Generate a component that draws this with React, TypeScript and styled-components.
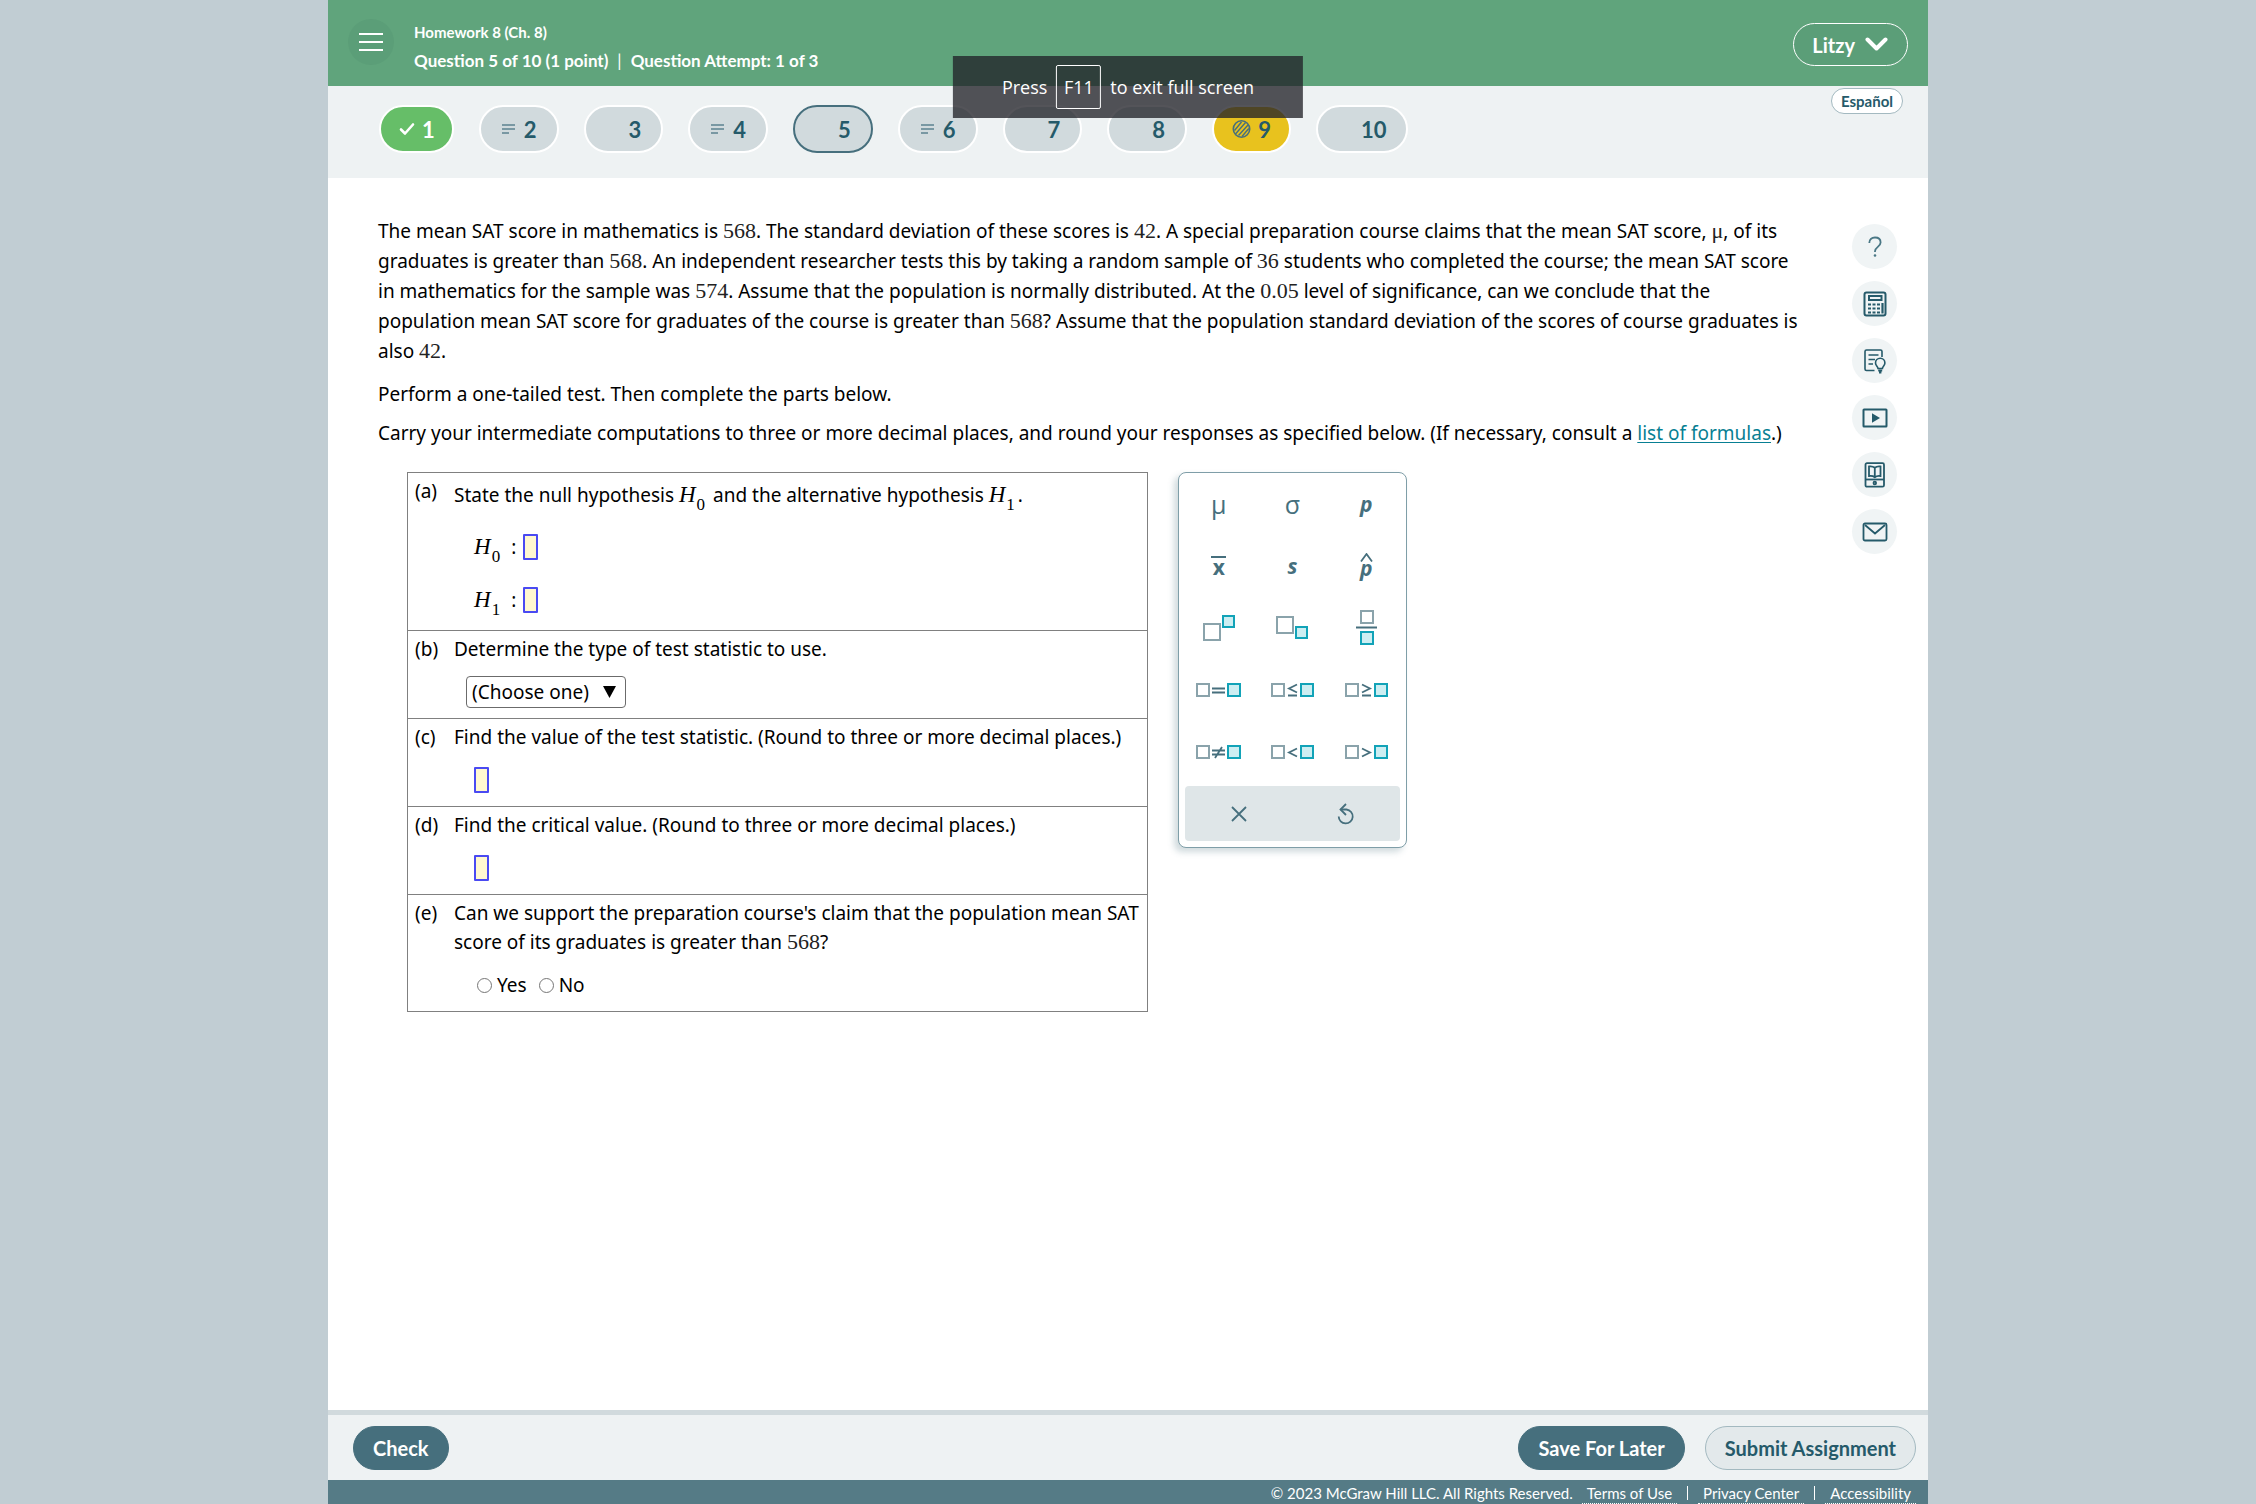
import React, { useState } from "react";
import styled, { createGlobalStyle, css } from "styled-components";

const ui = `Lato, "Open Sans", sans-serif`;
const reading = `"Noto Sans", "DejaVu Sans", Verdana, sans-serif`;
const math = `"Liberation Serif", "Times New Roman", serif`;

const color = {
  teal: "#466f7d",
  deep: "#255a6a",
  mist: "#eef2f3",
  slate: "#d1dadd",
  green: "#60a47c",
};

const GlobalStyle = createGlobalStyle`
  *, *::before, *::after { box-sizing: border-box; }
  body { margin: 0; background: #c1cdd3; font-family: ${reading}; color: #000; }
  button, input, select { font: inherit; margin: 0; }
  button { cursor: pointer; }
  p { margin: 0; }
`;

const Page = styled.div`
  display: flex;
  flex-direction: column;
  max-width: 1600px;
  min-height: 100vh;
  margin: 0 auto;
  background: #fff;
`;

/* ---------- header ---------- */

const Header = styled.header`
  display: flex;
  align-items: flex-start;
  height: 86px;
  padding: 19px 20px 0;
  background: ${color.green};
  color: #fff;
  font-family: ${ui};
`;

const MenuButton = styled.button`
  display: grid;
  place-items: center;
  width: 46px;
  height: 46px;
  padding: 0;
  border: 0;
  border-radius: 50%;
  background: #5b9e78;
`;

const Titles = styled.div`
  flex: 1;
  margin-left: 20px;
  font-weight: 700;
`;

const Course = styled.h1`
  margin: 0;
  font-size: 15px;
  line-height: 26px;
`;

const Attempt = styled.p`
  display: flex;
  font-size: 17px;
  line-height: 32px;
`;

const Bar = styled.span`
  margin: 0 9px;
  font-weight: 400;
`;

const UserButton = styled.button`
  display: flex;
  align-items: center;
  gap: 10px;
  height: 43px;
  margin-top: 4px;
  padding: 0 19px 0 18px;
  border: 1px solid #fff;
  border-radius: 22px;
  background: #5b9e78;
  color: #fff;
  font-size: 20px;
  font-weight: 700;
`;

/* ---------- question navigation ---------- */

const QuestionNav = styled.nav`
  display: flex;
  justify-content: space-between;
  align-items: flex-start;
  height: 92px;
  padding: 0 25px 0 51px;
  background: ${color.mist};
  font-family: ${ui};
`;

const Pills = styled.div`
  display: flex;
  gap: 25px;
  padding-top: 19px;
`;

type Status = "done" | "saved" | "blank" | "current" | "partial";

const Pill = styled.button<{ $status: Status }>`
  display: flex;
  align-items: center;
  gap: 8px;
  height: 48px;
  padding: 0 20px;
  border: 2px solid #fff;
  border-radius: 24px;
  background: ${color.slate};
  color: ${color.deep};
  font-size: 22px;
  font-weight: 700;
  ${(p) => p.$status === "done" && css`
    padding: 0 17px 0 18px;
    gap: 7px;
    background: #66be68;
    color: #fff;
  `}
  ${(p) => p.$status === "current" && css`border-color: ${color.teal};`}
  ${(p) => p.$status === "partial" && css`background: #e8c21e; padding: 0 18px; gap: 7px;`}
`;

const PillIcon = styled.span`
  display: grid;
  place-items: center;
  min-width: 15px;
`;

const Language = styled.button`
  height: 26px;
  margin-top: 2px;
  padding: 0 9px;
  border: 1px solid #a3b9c0;
  border-radius: 13px;
  background: #fff;
  color: ${color.deep};
  font-size: 15px;
  font-weight: 700;
  line-height: 22px;
`;

const Toast = styled.div`
  position: absolute;
  top: 56px;
  left: 50%;
  transform: translateX(-50%);
  display: flex;
  align-items: center;
  gap: 9px;
  height: 62px;
  padding: 0 49px;
  background: rgba(33, 33, 39, 0.77);
  color: #fff;
  font-family: "Open Sans", "Noto Sans", sans-serif;
  font-size: 18px;
  white-space: nowrap;
`;

const Key = styled.kbd`
  display: grid;
  place-items: center;
  width: 45px;
  height: 44px;
  border: 1px solid #fff;
  border-radius: 2px;
  font: inherit;
`;

/* ---------- question body ---------- */

const Body = styled.main`
  flex: 1;
  display: flex;
  justify-content: space-between;
  align-items: flex-start;
  padding: 38px 31px 24px 50px;
`;

const Question = styled.div`
  flex: 1;
  max-width: 1428px;
  font-size: 19px;
  line-height: 30px;
`;

const Paragraph = styled.p<{ $gap?: number }>`
  margin-top: ${(p) => p.$gap || 0}px;
`;

const Num = styled.span`
  font-family: ${math};
  font-size: 22px;
  line-height: 1;
  color: #222;
`;

const Link = styled.a`
  color: #087f93;
  text-decoration: underline;
  text-underline-offset: 2px;
`;

const Work = styled.div`
  display: flex;
  align-items: flex-start;
  gap: 30px;
  margin: 24px 0 0 29px;
`;

const Parts = styled.div`
  width: 741px;
  border: 1px solid #808080;
`;

const Part = styled.section`
  display: flex;
  padding: 4px 0 10px 7px;
  line-height: 29px;
  & + & { border-top: 1px solid #808080; }
`;

const PartLabel = styled.span`
  width: 39px;
  flex: none;
`;

const PartBody = styled.div`
  flex: 1;
`;

const HypothesisText = styled.p`
  line-height: 37px;
`;

const Answer = styled.div<{ $indent?: number }>`
  display: flex;
  align-items: center;
  height: 32px;
  margin-top: 12px;
  padding-left: ${(p) => p.$indent ?? 20}px;
`;

const Hypotheses = styled.div`
  display: flex;
  flex-direction: column;
  gap: 21px;
  margin: 17px 0 4px;
`;

const Hypothesis = styled.label`
  display: flex;
  align-items: center;
  height: 32px;
  padding-left: 20px;
`;

const Colon = styled.span`
  margin: 0 7px 0 8px;
`;

const Letter = styled.i`
  font-family: ${math};
  font-size: 23px;
  line-height: 1;
`;

const Sub = styled.sub`
  margin: 0 3px 0 1px;
  font-family: ${math};
  font-size: 17px;
  line-height: 0;
  vertical-align: -8px;
`;

const Blank = styled.input`
  width: 15px;
  height: 26px;
  padding: 0;
  border: 2px solid #4a4af2;
  border-radius: 1px;
  background: #fff8d0;
`;

const SelectBox = styled.span`
  position: relative;
  display: inline-flex;
`;

const Choice = styled.select`
  appearance: none;
  width: 160px;
  height: 32px;
  padding: 0 30px 0 5px;
  border: 1px solid #6b6b6b;
  border-radius: 4px;
  background: #fff;
  color: #000;
`;

const SelectArrow = styled.svg`
  position: absolute;
  right: 10px;
  top: 9px;
  pointer-events: none;
`;

const RadioLabel = styled.label`
  display: flex;
  align-items: center;
  gap: 5px;
  margin-right: 12px;
`;

const Radio = styled.input`
  appearance: none;
  width: 15px;
  height: 15px;
  border: 1px solid #767676;
  border-radius: 50%;
  background: #fff;
  &:checked { background: #767676; box-shadow: inset 0 0 0 3px #fff; }
`;

/* ---------- symbol palette ---------- */

const Palette = styled.div`
  width: 229px;
  padding: 3px;
  border: 1px solid #7f9ea8;
  border-radius: 8px;
  background: #fff;
  box-shadow: -4px 4px 6px rgba(70, 111, 125, 0.25);
`;

const SymbolButton = styled.button`
  display: grid;
  place-items: center;
  padding: 0;
  border: 0;
  background: none;
  color: ${color.teal};
  font-family: "Open Sans", sans-serif;
  font-size: 20px;
`;

const Symbols = styled.div`
  display: grid;
  grid-template-columns: repeat(3, 1fr);
  grid-auto-rows: 62px;
  ${SymbolButton} { padding-bottom: 7px; }
`;

const Glyph = styled.span<{ $strong?: boolean; $over?: boolean }>`
  font-weight: ${(p) => (p.$strong ? 700 : 400)};
  font-size: ${(p) => (p.$strong ? 21 : 25)}px;
  line-height: 20px;
  ${(p) => p.$over && css`
    width: 15px;
    border-top: 2px solid ${color.teal};
    line-height: 18px;
    text-align: center;
  `}
`;

const Hat = styled.span`
  display: grid;
  justify-items: center;
`;

const HatMark = styled.svg`
  margin-bottom: -4px;
`;

const PaletteFooter = styled.div`
  display: grid;
  grid-template-columns: 1fr 1fr;
  height: 55px;
  margin: 0 3px 3px;
  border-radius: 4px;
  background: #dfe6e8;
`;

/* ---------- tools and footers ---------- */

const Tools = styled.aside`
  display: flex;
  flex-direction: column;
  gap: 12px;
  padding-top: 8px;
`;

const ToolButton = styled.button`
  display: grid;
  place-items: center;
  width: 45px;
  height: 45px;
  padding: 0;
  border: 0;
  border-radius: 50%;
  background: #f0f4f5;
`;

const Actions = styled.div`
  display: flex;
  align-items: flex-start;
  gap: 20px;
  height: 70px;
  padding: 11px 12px 0 25px;
  border-top: 5px solid ${color.slate};
  background: ${color.mist};
`;

const Action = styled.button<{ $outline?: boolean }>`
  height: 44px;
  padding: 0 19px;
  border: 1px solid ${(p) => (p.$outline ? "#a3b9c0" : color.teal)};
  border-radius: 22px;
  background: ${(p) => (p.$outline ? "#e3e9eb" : color.teal)};
  color: ${(p) => (p.$outline ? color.deep : "#fff")};
  font-family: ${ui};
  font-size: 20px;
  font-weight: 700;
`;

const Spacer = styled.span`
  flex: 1;
`;

const Legal = styled.footer`
  display: flex;
  justify-content: flex-end;
  align-items: flex-start;
  height: 24px;
  padding: 4px 12px 0;
  background: #557b86;
  color: #fff;
  font-family: ${ui};
  font-size: 15px;
  line-height: 19px;
`;

const LegalLink = styled.a`
  margin-left: 9px;
  padding: 0 5px;
  border-bottom: 1px dotted #fff;
  color: #fff;
  text-decoration: none;
`;

const Divider = styled.span`
  width: 1px;
  height: 14px;
  margin: 2px 1px 0 10px;
  background: #fff;
`;

/* ---------- icons ---------- */

const LinesIcon = () => (
  <svg width="15" height="10" viewBox="0 0 15 10" stroke="#5c8390" strokeWidth="1.5">
    <path d="M1 1h13M1 5h13M1 9h7" />
  </svg>
);
const CheckIcon = () => (
  <svg width="16" height="14" viewBox="0 0 16 14" fill="none" stroke="#fff" strokeWidth="2.6" strokeLinecap="round" strokeLinejoin="round">
    <path d="M2 7.5l4 4L14 2.5" />
  </svg>
);
const HatchIcon = () => (
  <svg width="19" height="20" viewBox="0 0 19 20" fill="none" stroke={color.teal} strokeWidth="1.4">
    <circle cx="9.5" cy="10" r="8.2" strokeWidth="1.6" />
    <path d="M2.5 11.500L9.500 3M3.500 15L13.500 3.500M6.500 16.500L16 6M10 17.500L16.800 9.500" />
  </svg>
);

type Tool = { name: string; icon: React.ReactNode };
const tools: Tool[] = [
  {
    name: "Help",
    icon: (
      <svg width="16" height="22" viewBox="0 0 16 22" fill="none" stroke="#4a7785" strokeWidth="1.8">
        <path d="M2.300 7C2.300 3.400 4.600 1.500 8 1.500s5.600 2 5.600 5c0 4.300-5.600 4.500-5.600 8.800V16" />
        <circle cx="8" cy="19.500" r="1.300" fill="#4a7785" stroke="none" />
      </svg>
    ),
  },
  {
    name: "Calculator",
    icon: (
      <svg width="24" height="26" viewBox="0 0 24 26" fill="none" stroke={color.deep} strokeWidth="2">
        <rect x="1.500" y="1.500" width="21" height="23" rx="2" />
        <rect x="6" y="5" width="12.500" height="4" />
        <path d="M5 13.500h3M9.500 13.500h3M14 13.500h3M5 17.500h3M9.500 17.500h3M14 17.500h3M5 21.500h3M9.500 21.500h3M14 21.500h3M19.500 12v10.500" strokeWidth="2.200" />
      </svg>
    ),
  },
  {
    name: "Hint",
    icon: (
      <svg width="24" height="26" viewBox="0 0 24 26" fill="none" stroke={color.deep} strokeWidth="1.6">
        <path d="M11.500 22.500H3.500Q2 22.500 2 21V3.500Q2 2 3.500 2H17.500Q19 2 19 3.500V9" />
        <path d="M5.500 7h10M5.500 11.500h6.500M5.500 16h4.500" />
        <path d="M15 20.500c0-2-2.500-2.700-2.500-5.500a4.700 4.700 0 0 1 9.400 0c0 2.800-2.500 3.500-2.500 5.500z" />
        <path d="M15.200 22.500h4M16 24.500h2.400" strokeWidth="2.200" />
      </svg>
    ),
  },
  {
    name: "Video",
    icon: (
      <svg width="26" height="20" viewBox="0 0 26 20" fill="none" stroke={color.deep} strokeWidth="2">
        <rect x="1.500" y="1.500" width="23" height="17" rx=".5" />
        <path d="M10 5.200L18 10l-8 4.800z" fill={color.deep} stroke="none" />
      </svg>
    ),
  },
  {
    name: "eBook",
    icon: (
      <svg width="22" height="26" viewBox="0 0 22 26" fill="none" stroke={color.deep} strokeWidth="1.800">
        <rect x="1.500" y="1.200" width="18.500" height="23.500" rx="1.500" />
        <path d="M1.500 17.500H20" />
        <path d="M5 4.500q3.500-.5 5.800 1.300Q13 4 16.500 4.500v9.500q-3.500-.5-5.700 1.200Q8.500 13.500 5 14zM10.800 5.800v9.400" />
        <circle cx="10.800" cy="21" r="1.300" />
      </svg>
    ),
  },
  {
    name: "Message",
    icon: (
      <svg width="26" height="20" viewBox="0 0 26 20" fill="none" stroke={color.deep} strokeWidth="1.800">
        <rect x="1.500" y="1.500" width="23" height="17" rx="1.500" />
        <path d="M3 3l10 8.500L23 3" />
      </svg>
    ),
  },
];

const Slot = ({ x, y, s, filled }: { x: number; y: number; s: number; filled?: boolean }) => (
  <rect
    x={x + 1}
    y={y + 1}
    width={s - 2}
    height={s - 2}
    fill={filled ? "#cdeef2" : "#fff"}
    stroke={filled ? "#12a3b8" : "#8aa3ab"}
    strokeWidth="2"
  />
);

const PowerIcon = () => (
  <svg width="32" height="26"><Slot x={0} y={8} s={18} /><Slot x={19} y={0} s={13} filled /></svg>
);
const IndexIcon = () => (
  <svg width="32" height="23"><Slot x={0} y={0} s={18} /><Slot x={19} y={10} s={13} filled /></svg>
);
const FractionIcon = () => (
  <svg width="21" height="35">
    <Slot x={4} y={0} s={14} />
    <path d="M0 17.500h21" stroke={color.teal} strokeWidth="2" />
    <Slot x={4} y={21} s={14} filled />
  </svg>
);

const relationPaths: Record<string, string> = {
  "=": "M1 5.500h13M1 9.500h13",
  "≠": "M1 5.500h13M1 9.500h13M4 13L11 2",
  "≤": "M10 1.500L2 5.500l8 4M1 12.500h9",
  "≥": "M1 1.500L9 5.500l-8 4M1 12.500h9",
  "<": "M10 3.500L2 7.500l8 4",
  ">": "M1 3.500L9 7.500l-8 4",
};

const Relation = ({ sign }: { sign: string }) => {
  const gap = sign === "=" || sign === "≠" ? 17 : 15;
  return (
    <svg width={28 + gap} height="14">
      <Slot x={0} y={0} s={14} />
      <path transform={`translate(${gap === 17 ? 15 : 16} 0)`} d={relationPaths[sign]} fill="none" stroke={color.teal} strokeWidth="1.800" />
      <Slot x={14 + gap} y={0} s={14} filled />
    </svg>
  );
};

const symbols: Tool[] = [
  { name: "mu", icon: <Glyph>μ</Glyph> },
  { name: "sigma", icon: <Glyph>σ</Glyph> },
  { name: "p", icon: <Glyph $strong><i>p</i></Glyph> },
  { name: "x bar", icon: <Glyph $strong $over>x</Glyph> },
  { name: "s", icon: <Glyph $strong><i>s</i></Glyph> },
  {
    name: "p hat",
    icon: (
      <Hat>
        <HatMark width="13" height="9" viewBox="0 0 13 9" fill="none" stroke={color.teal} strokeWidth="1.800"><path d="M1 8.500L6.500 1 12 8.500" /></HatMark>
        <Glyph $strong><i>p</i></Glyph>
      </Hat>
    ),
  },
  { name: "superscript", icon: <PowerIcon /> },
  { name: "subscript", icon: <IndexIcon /> },
  { name: "fraction", icon: <FractionIcon /> },
  ...["=", "≤", "≥", "≠", "<", ">"].map((s) => ({ name: `relation ${s}`, icon: <Relation sign={s} /> })),
];

const questions: Status[] = ["done", "saved", "blank", "saved", "current", "saved", "blank", "blank", "partial", "blank"];

const statusIcon = (s: Status) =>
  s === "done" ? <CheckIcon /> : s === "saved" ? <LinesIcon /> : s === "partial" ? <HatchIcon /> : null;

const H = ({ n }: { n: number }) => (
  <span><Letter>H</Letter><Sub>{n}</Sub></span>
);

export default function App() {
  const [answer, setAnswer] = useState("");
  return (
    <>
      <GlobalStyle />
      <Page>
        <Header>
          <MenuButton aria-label="Menu">
            <svg width="24" height="20" viewBox="0 0 24 20" stroke="#fff" strokeWidth="2">
              <path d="M0 2h24M0 10h24M0 18h24" />
            </svg>
          </MenuButton>
          <Titles>
            <Course>Homework 8 (Ch. 8)</Course>
            <Attempt>
              Question 5 of 10 (1 point)<Bar>|</Bar>Question Attempt: 1 of 3
            </Attempt>
          </Titles>
          <UserButton>
            Litzy
            <svg width="23" height="15" viewBox="0 0 23 15" fill="none" stroke="#fff" strokeWidth="4" strokeLinecap="round" strokeLinejoin="round">
              <path d="M2.500 2.500l9 9 9-9" />
            </svg>
          </UserButton>
        </Header>

        <QuestionNav aria-label="Questions">
          <Pills>
            {questions.map((status, i) => (
              <Pill key={i} $status={status}>
                <PillIcon>{statusIcon(status)}</PillIcon>
                {i + 1}
              </Pill>
            ))}
          </Pills>
          <Language>Español</Language>
        </QuestionNav>

        <Body>
          <Question>
            <Paragraph>
              The mean SAT score in mathematics is <Num>568</Num>. The standard deviation of these scores is <Num>42</Num>. A
              special preparation course claims that the mean SAT score, <Num>μ</Num>, of its graduates is greater
              than <Num>568</Num>. An independent researcher tests this by taking a random sample of <Num>36</Num> students who
              completed the course; the mean SAT score in mathematics for the sample was <Num>574</Num>. Assume that the
              population is normally distributed. At the <Num>0.05</Num> level of significance, can we conclude that the
              population mean SAT score for graduates of the course is greater than <Num>568</Num>? Assume that the population
              standard deviation of the scores of course graduates is also <Num>42</Num>.
            </Paragraph>
            <Paragraph $gap={13}>Perform a one-tailed test. Then complete the parts below.</Paragraph>
            <Paragraph $gap={9}>
              Carry your intermediate computations to three or more decimal places, and round your responses as specified
              below. (If necessary, consult a <Link href="#formulas">list of formulas</Link>.)
            </Paragraph>

            <Work>
              <Parts>
                <Part>
                  <PartLabel>(a)</PartLabel>
                  <PartBody>
                    <HypothesisText>
                      State the null hypothesis <H n={0} /> and the alternative hypothesis <H n={1} />.
                    </HypothesisText>
                    <Hypotheses>
                      {[0, 1].map((n) => (
                        <Hypothesis key={n}>
                          <H n={n} />
                          <Colon>:</Colon>
                          <Blank />
                        </Hypothesis>
                      ))}
                    </Hypotheses>
                  </PartBody>
                </Part>
                <Part>
                  <PartLabel>(b)</PartLabel>
                  <PartBody>
                    <label htmlFor="statistic">Determine the type of test statistic to use.</label>
                    <Answer $indent={12}>
                      <SelectBox>
                        <Choice id="statistic">
                          <option>(Choose one)</option>
                          <option>Z</option>
                          <option>t</option>
                        </Choice>
                        <SelectArrow width="13" height="13"><path d="M0 1h13L6.500 13z" /></SelectArrow>
                      </SelectBox>
                    </Answer>
                  </PartBody>
                </Part>
                <Part>
                  <PartLabel>(c)</PartLabel>
                  <PartBody>
                    <label htmlFor="value">Find the value of the test statistic. (Round to three or more decimal places.)</label>
                    <Answer><Blank id="value" /></Answer>
                  </PartBody>
                </Part>
                <Part>
                  <PartLabel>(d)</PartLabel>
                  <PartBody>
                    <label htmlFor="critical">Find the critical value. (Round to three or more decimal places.)</label>
                    <Answer><Blank id="critical" /></Answer>
                  </PartBody>
                </Part>
                <Part>
                  <PartLabel>(e)</PartLabel>
                  <PartBody>
                    <p>
                      Can we support the preparation course's claim that the population mean SAT score of its graduates is
                      greater than <Num>568</Num>?
                    </p>
                    <Answer $indent={23}>
                      {["Yes", "No"].map((v) => (
                        <RadioLabel key={v}>
                          <Radio type="radio" name="support" checked={answer === v} onChange={() => setAnswer(v)} />
                          {v}
                        </RadioLabel>
                      ))}
                    </Answer>
                  </PartBody>
                </Part>
              </Parts>

              <Palette>
                <Symbols>
                  {symbols.map((s) => (
                    <SymbolButton key={s.name} aria-label={s.name}>{s.icon}</SymbolButton>
                  ))}
                </Symbols>
                <PaletteFooter>
                  <SymbolButton aria-label="Clear">
                    <svg width="16" height="16" stroke={color.teal} strokeWidth="1.800"><path d="M1 1l14 14M15 1L1 15" /></svg>
                  </SymbolButton>
                  <SymbolButton aria-label="Undo">
                    <svg width="18" height="22" viewBox="0 0 18 22" fill="none" stroke={color.teal} strokeWidth="1.800">
                      <path d="M9 1L3.500 6.500 9 12" />
                      <path d="M3.500 6.500H9.500a7 7 0 1 1-7.800 7" />
                    </svg>
                  </SymbolButton>
                </PaletteFooter>
              </Palette>
            </Work>
          </Question>

          <Tools>
            {tools.map((t) => (
              <ToolButton key={t.name} aria-label={t.name}>{t.icon}</ToolButton>
            ))}
          </Tools>
        </Body>

        <Actions>
          <Action>Check</Action>
          <Spacer />
          <Action>Save For Later</Action>
          <Action $outline>Submit Assignment</Action>
        </Actions>
        <Legal>
          <span>© 2023 McGraw Hill LLC. All Rights Reserved.</span>
          <LegalLink href="#terms">Terms of Use</LegalLink>
          <Divider />
          <LegalLink href="#privacy">Privacy Center</LegalLink>
          <Divider />
          <LegalLink href="#accessibility">Accessibility</LegalLink>
        </Legal>
      </Page>
      <Toast role="status">
        Press <Key>F11</Key> to exit full screen
      </Toast>
    </>
  );
}
